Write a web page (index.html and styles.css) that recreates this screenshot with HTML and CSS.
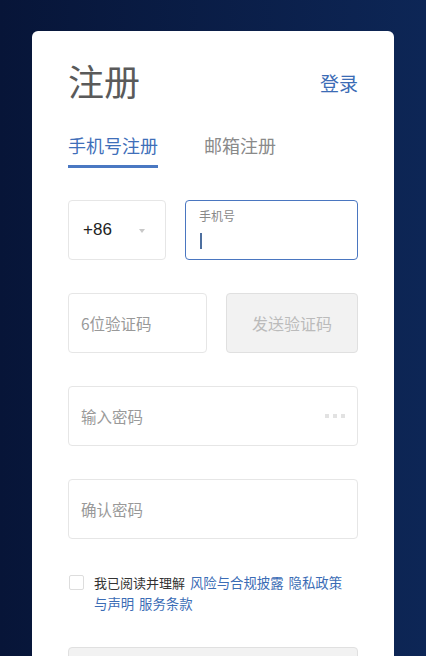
FILE: index.html
```html
<!DOCTYPE html>
<html>
<head>
    <title>注册</title>
    <link rel="stylesheet" href="styles.css">
</head>
<body>
    <div class="page">
        <div class="register-card">
            <div class="card-header">
                <h1>注册</h1>
                <a class="login-link" href="#">登录</a>
            </div>

            <div class="tabs">
                <span class="tab active">手机号注册</span>
                <span class="tab">邮箱注册</span>
            </div>

            <div class="form-row">
                <div class="field country-select">
                    <span class="country-code">+86</span>
                    <span class="select-arrow"></span>
                </div>
                <div class="field phone-field focused">
                    <span class="field-label">手机号</span>
                    <span class="caret"></span>
                </div>
            </div>

            <div class="form-row">
                <div class="field code-field">
                    <span class="placeholder">6位验证码</span>
                </div>
                <button class="send-button" disabled>发送验证码</button>
            </div>

            <div class="form-row">
                <div class="field wide-field">
                    <span class="placeholder">输入密码</span>
                    <span class="pwd-dots"><i></i><i></i><i></i></span>
                </div>
            </div>

            <div class="form-row">
                <div class="field wide-field">
                    <span class="placeholder">确认密码</span>
                </div>
            </div>

            <div class="agreement">
                <span class="checkbox"></span>
                <p>我已阅读并理解 <a href="#">风险与合规披露</a> <a href="#">隐私政策与声明</a> <a href="#">服务条款</a></p>
            </div>

            <button class="submit-button" disabled>注册</button>
        </div>
    </div>
</body>
</html>
```

FILE: styles.css
```css
body {
    margin: 0;
    height: 656px;
    overflow: hidden;
    background: linear-gradient(to right, #071538, #0d2656);
    font-family: "Noto Sans CJK SC", "Liberation Sans", sans-serif;
}

.page {
    padding: 31px 32px 0;
}

.register-card {
    background-color: white;
    border-radius: 6px 6px 0 0;
    padding: 26px 36px 40px;
}

.card-header {
    display: flex;
    justify-content: space-between;
    align-items: center;
}

h1 {
    margin: 0;
    font-size: 36px;
    line-height: 46px;
    font-weight: 400;
    color: #5a5a5a;
}

.login-link {
    margin-top: 4px;
    font-size: 19px;
    color: #3b6cb5;
    text-decoration: none;
}

/* Tabs */
.tabs {
    display: flex;
    gap: 46px;
    margin-top: 30px;
}

.tab {
    font-size: 18px;
    line-height: 24px;
    color: #8a8a8a;
    padding-bottom: 8px;
    border-bottom: 3px solid transparent;
}

.tab.active {
    color: #3f6fb9;
    border-bottom-color: #4a78c2;
}

/* Form */
.form-row {
    display: flex;
    gap: 19px;
    margin-top: 33px;
}

.tabs + .form-row {
    margin-top: 32px;
}

.field {
    box-sizing: border-box;
    height: 60px;
    border: 1px solid #e6e6e6;
    border-radius: 4px;
    display: flex;
    align-items: center;
    padding: 0 12px;
}

.country-select {
    width: 98px;
    padding-left: 14px;
    justify-content: space-between;
    padding-right: 20px;
}

.country-code {
    font-family: "Liberation Sans", Arial, sans-serif;
    font-size: 17px;
    color: #222;
}

.select-arrow {
    width: 0;
    height: 0;
    border-left: 3.5px solid transparent;
    border-right: 3.5px solid transparent;
    border-top: 4px solid #c8c8c8;
    margin-top: 2px;
}

.phone-field {
    flex: 1;
    border: 1.5px solid #4a76c0;
    flex-direction: column;
    align-items: flex-start;
    justify-content: flex-start;
    padding: 7px 13px 0;
}

.field-label {
    font-size: 12px;
    line-height: 16px;
    color: #888;
}

.caret {
    width: 1.5px;
    height: 16px;
    margin-top: 9px;
    margin-left: 1px;
    background-color: #4d6f9f;
}

.placeholder {
    font-size: 15.5px;
    color: #999;
}

.code-field {
    width: 139px;
}

.send-button {
    width: 132px;
    height: 60px;
    background-color: #f2f2f2;
    border: 1px solid #e0e0e0;
    border-radius: 4px;
    font-family: inherit;
    font-size: 16px;
    color: #bbb;
}

.wide-field {
    flex: 1;
    justify-content: space-between;
}

.pwd-dots {
    display: flex;
    gap: 4px;
    margin-right: 0;
}

.pwd-dots i {
    width: 4px;
    height: 4px;
    background-color: #e2e2e2;
}

/* Agreement */
.agreement {
    display: flex;
    align-items: flex-start;
    margin-top: 33px;
    padding-right: 8px;
}

.checkbox {
    flex: none;
    box-sizing: border-box;
    width: 15px;
    height: 15px;
    border: 1px solid #ddd;
    border-radius: 2px;
    margin: 3px 10px 0 1px;
}

.agreement p {
    margin: 0;
    font-size: 13px;
    line-height: 20px;
    color: #333;
}

.agreement a {
    color: #3b6cb5;
    text-decoration: none;
    font-size: 13.4px;
    margin-left: 2px;
}

.submit-button {
    display: block;
    width: 100%;
    height: 60px;
    margin-top: 33px;
    background-color: #f2f2f2;
    border: 1px solid #e0e0e0;
    border-radius: 4px;
    font-family: inherit;
    font-size: 17px;
    color: #bbb;
}
```
